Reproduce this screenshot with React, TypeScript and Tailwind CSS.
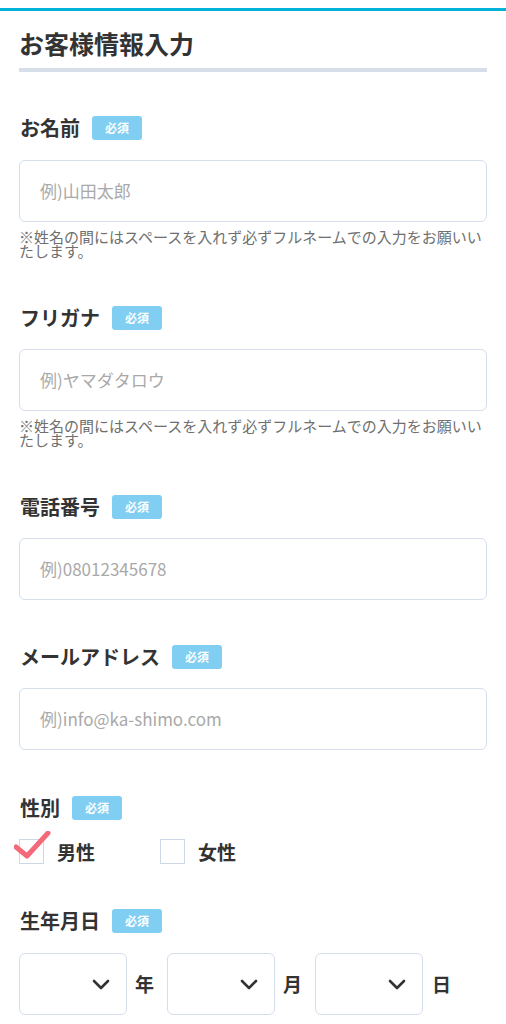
import React from "react";

const FONT = { fontFamily: '"Noto Sans CJK JP", "Noto Sans", sans-serif' };

function Badge() {
  return (
    <span className="inline-flex h-[24px] w-[50px] items-center justify-center rounded-[3px] bg-[#80cef2] text-[12px] font-semibold text-white">
      必須
    </span>
  );
}

function LabelRow({ label }: { label: string }) {
  return (
    <div className="flex h-[24px] items-center gap-[12px]">
      <span className="pl-[1px] text-[20px] font-bold leading-[24px] text-[#333]">{label}</span>
      <Badge />
    </div>
  );
}

function Input({ placeholder }: { placeholder: string }) {
  return (
    <div className="flex h-[62px] w-full items-center rounded-[6px] border border-[#d6ddeb] px-[20px]">
      <span className="text-[17px] text-[#a9a9a9]">{placeholder}</span>
    </div>
  );
}

function Note() {
  return (
    <p className="mt-[8px] text-[15px] leading-[14px] text-[#6f6f6f]">
      ※姓名の間にはスペースを入れず必ずフルネームでの入力をお願いいたします。
    </p>
  );
}

function Checkbox({ checked }: { checked?: boolean }) {
  return (
    <span className="relative block h-[25px] w-[25px] border-[1.5px] border-[#cfd8e6] bg-white">
      {checked && (
        <svg
          className="absolute left-[-6px] top-[-9px]"
          width="38"
          height="30"
          viewBox="0 0 38 30"
        >
          <path
            d="M2 16 L13 25 L34 2"
            fill="none"
            stroke="#f4697a"
            strokeWidth="5"
            strokeLinecap="round"
            strokeLinejoin="round"
          />
        </svg>
      )}
    </span>
  );
}

function Select() {
  return (
    <div className="flex h-[62px] w-[108px] shrink-0 items-center justify-end rounded-[6px] border border-[#d6ddeb] pr-[16px]">
      <svg width="18" height="11" viewBox="0 0 18 11">
        <path d="M2 2 L9 9 L16 2" fill="none" stroke="#333" strokeWidth="2.6" strokeLinecap="round" strokeLinejoin="round" />
      </svg>
    </div>
  );
}

export default function App() {
  return (
    <div className="min-h-screen w-full bg-white pt-[8px]" style={FONT}>
      <div className="h-[3px] w-full bg-[#00b1da]" />
      <div className="px-[19px]">
        <h1 className="mt-[16px] text-[25px] font-bold leading-[32px] text-[#333]">お客様情報入力</h1>
        <div className="mt-[9px] h-[4px] w-full bg-[#d6dfe9]" />

        <section className="mt-[44px]">
          <LabelRow label="お名前" />
          <div className="mt-[20px]">
            <Input placeholder="例)山田太郎" />
          </div>
          <Note />
        </section>

        <section className="mt-[48px]">
          <LabelRow label="フリガナ" />
          <div className="mt-[19px]">
            <Input placeholder="例)ヤマダタロウ" />
          </div>
          <Note />
        </section>

        <section className="mt-[48px]">
          <LabelRow label="電話番号" />
          <div className="mt-[19px]">
            <Input placeholder="例)08012345678" />
          </div>
        </section>

        <section className="mt-[45px]">
          <LabelRow label="メールアドレス" />
          <div className="mt-[19px]">
            <Input placeholder="例)info@ka-shimo.com" />
          </div>
        </section>

        <section className="mt-[46px]">
          <LabelRow label="性別" />
          <div className="mt-[19px] flex items-center gap-[65px]">
            <label className="flex items-center gap-[13px]">
              <Checkbox checked />
              <span className="text-[19px] font-bold leading-[25px] text-[#333]">男性</span>
            </label>
            <label className="flex items-center gap-[13px]">
              <Checkbox />
              <span className="text-[19px] font-bold leading-[25px] text-[#333]">女性</span>
            </label>
          </div>
        </section>

        <section className="mt-[45px]">
          <LabelRow label="生年月日" />
          <div className="mt-[20px] flex items-center">
            <Select />
            <span className="ml-[8px] mr-[13px] text-[19px] font-bold text-[#333]">年</span>
            <Select />
            <span className="ml-[8px] mr-[13px] text-[19px] font-bold text-[#333]">月</span>
            <Select />
            <span className="ml-[9px] text-[19px] font-bold text-[#333]">日</span>
          </div>
        </section>
      </div>
    </div>
  );
}
